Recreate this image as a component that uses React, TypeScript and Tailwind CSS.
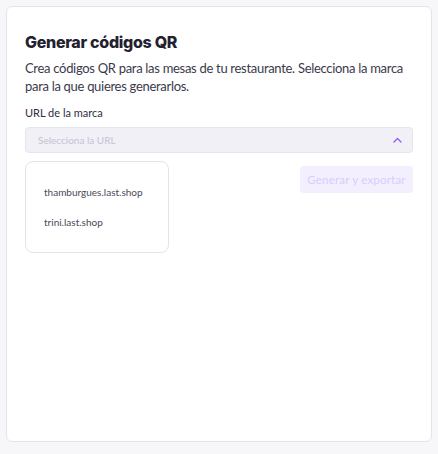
export default function App() {
  return (
    <div className="h-[454px] w-[438px] bg-[#f7f7fa] p-[6px]">
      <div className="flex h-[436px] flex-col rounded-[6px] border border-[#e4e3ec] bg-white pl-[18px] pr-[18px] pt-[23px] font-['Lato',sans-serif]">
        <h1 className="font-['Inter',sans-serif] text-[16px] font-extrabold leading-[24px] tracking-[-0.3px] text-[#23212f]">
          Generar códigos QR
        </h1>
        <p className="mt-[5px] text-[13px] leading-[18px] tracking-[-0.3px] text-[#3b3a4a]">
          Crea códigos QR para las mesas de tu restaurante. Selecciona la marca para la que quieres generarlos.
        </p>
        <label className="mt-[10px] text-[11px] leading-[16px] text-[#2f2e3c]">URL de la marca</label>
        <div className="mt-[6px] flex h-[26px] items-center justify-between rounded-[4px] border border-[#e6e5ee] bg-[#f1f0f6] pl-[12px] pr-[10px]">
          <span className="text-[10px] text-[#c4c2d4]">Selecciona la URL</span>
          <svg width="9" height="6" viewBox="0 0 9 6" fill="none">
            <path d="M1 5 L4.5 1.5 L8 5" stroke="#8b5cf6" strokeWidth="1.3" strokeLinecap="round" strokeLinejoin="round" />
          </svg>
        </div>
        <div className="mt-[8px] flex items-start justify-between">
          <div className="flex h-[92px] w-[144px] flex-col gap-[18px] rounded-[8px] border border-[#e4e3ec] pl-[18px] pt-[24px]">
            <span className="text-[10px] leading-[12px] text-[#4a4958]">thamburgues.last.shop</span>
            <span className="text-[10px] leading-[12px] text-[#4a4958]">trini.last.shop</span>
          </div>
          <button className="mt-[5px] h-[27px] w-[113px] rounded-[4px] bg-[#f3efff] text-[11.5px] tracking-[0.2px] text-[#d8cdfb]">
            Generar y exportar
          </button>
        </div>
      </div>
    </div>
  );
}
